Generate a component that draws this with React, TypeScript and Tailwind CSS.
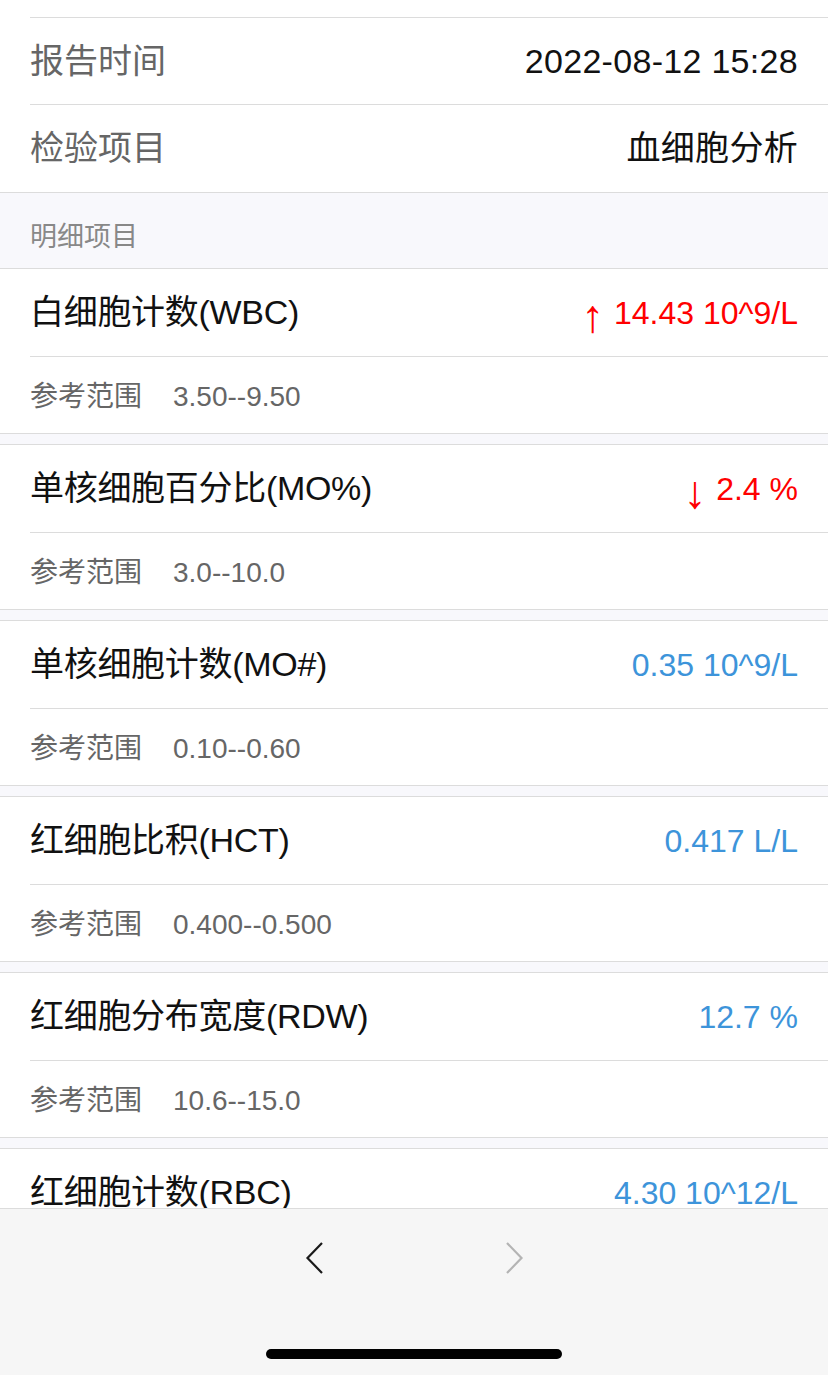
import React from "react";

type Item = {
  name: string;
  value: string;
  flag?: "up" | "down";
  range: string;
};

const items: Item[] = [
  { name: "白细胞计数(WBC)", value: "14.43 10^9/L", flag: "up", range: "3.50--9.50" },
  { name: "单核细胞百分比(MO%)", value: "2.4 %", flag: "down", range: "3.0--10.0" },
  { name: "单核细胞计数(MO#)", value: "0.35 10^9/L", range: "0.10--0.60" },
  { name: "红细胞比积(HCT)", value: "0.417 L/L", range: "0.400--0.500" },
  { name: "红细胞分布宽度(RDW)", value: "12.7 %", range: "10.6--15.0" },
  { name: "红细胞计数(RBC)", value: "4.30 10^12/L", range: "3.80--5.10" },
];

function InfoRow({ label, value, h }: { label: string; value: string; h: string }) {
  return (
    <div className="pl-[30px]">
      <div className={`flex items-center justify-between border-t border-[#dcdcdc] pr-[30px] ${h}`}>
        <span className="text-[34px] text-[#666]">{label}</span>
        <span className="text-[34px] tracking-[0.3px] text-[#111]">{value}</span>
      </div>
    </div>
  );
}

function ResultCard({ item }: { item: Item }) {
  const abnormal = !!item.flag;
  return (
    <div className="mb-[10px] border-y border-[#dcdcdc] bg-white">
      <div className="flex h-[87px] items-center justify-between pl-[30px] pr-[30px]">
        <span className="text-[34px] tracking-[-0.3px] text-[#111]">{item.name}</span>
        <span
          className={`flex items-center text-[32px] ${abnormal ? "text-[#ff0000]" : "text-[#3d94da]"}`}
        >
          {item.flag && (
            <span className="mr-[10px] inline-block translate-y-[3px] text-[46px] leading-none">
              {item.flag === "up" ? "↑" : "↓"}
            </span>
          )}
          <span>{item.value}</span>
        </span>
      </div>
      <div className="pl-[30px]">
        <div className="flex h-[77px] items-center border-t border-[#dcdcdc] pt-[3px]">
          <span className="text-[28px] text-[#666]">参考范围</span>
          <span className="ml-[31px] text-[28px] text-[#666]">{item.range}</span>
        </div>
      </div>
    </div>
  );
}

export default function App() {
  return (
    <div
      className="flex h-[1375px] w-full flex-col overflow-hidden bg-white"
      style={{ fontFamily: '"Liberation Sans", "Noto Sans CJK SC", sans-serif' }}
    >
      {/* scroll area */}
      <div className="flex-1 overflow-hidden bg-[#f8f8fc]">
        <div className="bg-white">
          <div className="h-[17px]" />
          <InfoRow label="报告时间" value="2022-08-12 15:28" h="h-[87px]" />
          <InfoRow label="检验项目" value="血细胞分析" h="h-[88px]" />
        </div>
        <div className="flex h-[76px] items-center border-t border-[#dcdcdc] pl-[30px] pt-[14px]">
          <span className="text-[27px] text-[#888]">明细项目</span>
        </div>
        {items.map((it) => (
          <ResultCard key={it.name} item={it} />
        ))}
      </div>

      {/* bottom toolbar */}
      <div className="flex h-[167px] shrink-0 flex-col items-center border-t border-[#dcdcdc] bg-[#f6f6f6]">
        <div className="mt-[33px] flex items-center gap-[183px]">
          <svg width="18" height="32" viewBox="0 0 18 32" fill="none">
            <path d="M17 1 L2.5 16 L17 31" stroke="#1a1a1a" strokeWidth="2.2" />
          </svg>
          <svg width="18" height="32" viewBox="0 0 18 32" fill="none">
            <path d="M1 1 L15.5 16 L1 31" stroke="#b4b4b4" strokeWidth="2.2" />
          </svg>
        </div>
        <div className="mt-[75px] h-[10px] w-[296px] rounded-full bg-black" />
      </div>
    </div>
  );
}
